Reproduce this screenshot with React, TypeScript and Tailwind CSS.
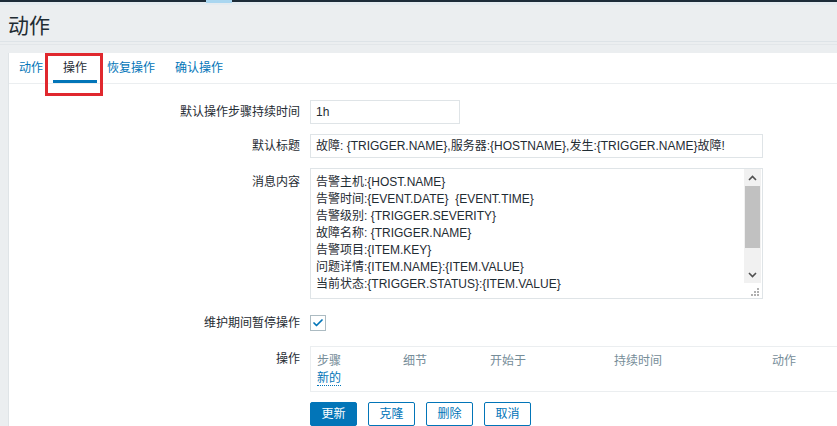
import { Check } from 'lucide-react'

const font = { fontFamily: '"Liberation Sans", Arial, "Noto Sans CJK SC", sans-serif' }

export default function App() {
  const tabs = ['动作', '操作', '恢复操作', '确认操作']
  const lines = [
    '告警主机:{HOST.NAME}',
    '告警时间:{EVENT.DATE}  {EVENT.TIME}',
    '告警级别: {TRIGGER.SEVERITY}',
    '故障名称: {TRIGGER.NAME}',
    '告警项目:{ITEM.KEY}',
    '问题详情:{ITEM.NAME}:{ITEM.VALUE}',
    '当前状态:{TRIGGER.STATUS}:{ITEM.VALUE}',
  ]
  const cols = [
    { name: '步骤', w: 'w-[86px]' },
    { name: '细节', w: 'w-[87px]' },
    { name: '开始于', w: 'w-[124px]' },
    { name: '持续时间', w: 'w-[158px]' },
    { name: '动作', w: 'w-[60px]' },
  ]

  return (
    <div className="w-[837px] h-[426px] overflow-hidden bg-[#ebeef0] text-[12px] text-[#1f2c33]" style={font}>
      {/* top bar */}
      <div className="h-[2px] bg-[#1d2c38] flex">
        <div className="ml-[206px] w-[26px] h-[3px] bg-[#a9d6f0]" />
      </div>
      <div className="h-[3px] bg-[#e4ebf0]" />

      {/* header */}
      <div className="h-[37px] pl-[8px] flex items-center border-b border-[#dde3e7]">
        <h1 className="text-[21px] leading-none mt-[4px]">动作</h1>
      </div>
      <div className="h-[3px] border-b border-[#e2e6e9]" />
      <div className="h-[8px]" />

      {/* panel */}
      <div className="ml-[8px] bg-white border-l border-[#dfe4e7] h-[400px] relative">
        <div className="flex h-[31px] border-b border-[#ebeef0]">
          {tabs.map((t, i) => (
            <div
              key={t}
              className={`px-[10px] flex items-center ${
                i === 1 ? 'text-[#1f2c33] border-b-[3px] border-[#0275b8] pt-[3px]' : 'text-[#0275b8]'
              }`}
            >
              {t}
            </div>
          ))}
        </div>
        {/* annotation */}
        <div className="absolute left-[36px] top-0 w-[58px] h-[43px] border-[3px] border-[#e0282e]" />

        <div className="pt-[16px]">
          <div className="flex items-center h-[24px]">
            <div className="w-[301px] text-right pr-[10px]">默认操作步骤持续时间</div>
            <div className="w-[150px] h-[24px] border border-[#dfe4e7] px-[5px] flex items-center">1h</div>
          </div>

          <div className="flex items-center h-[24px] mt-[10px]">
            <div className="w-[301px] text-right pr-[10px]">默认标题</div>
            <div className="w-[453px] h-[24px] border border-[#dfe4e7] px-[5px] flex items-center whitespace-nowrap overflow-hidden">
              故障: {'{TRIGGER.NAME}'},服务器:{'{HOSTNAME}'},发生:{'{TRIGGER.NAME}'}故障!
            </div>
          </div>

          <div className="flex mt-[10px]">
            <div className="w-[301px] text-right pr-[10px] pt-[5px]">消息内容</div>
            <div className="w-[453px] h-[131px] border border-[#dfe4e7] flex overflow-hidden">
              <div className="flex-1 pl-[5px] pt-[5px] leading-[17px] whitespace-pre overflow-hidden">
                {lines.map((l) => (
                  <div key={l}>{l}</div>
                ))}
              </div>
              <div className="w-[17px] flex flex-col mr-[1px]">
                <div className="flex-1 flex flex-col bg-[#f1f1f1]">
                  <div className="h-[17px] flex items-center justify-center text-[#505050]">
                    <svg width="9" height="6" viewBox="0 0 9 6">
                      <path d="M1 5 L4.5 1.5 L8 5" fill="none" stroke="currentColor" strokeWidth="1.6" />
                    </svg>
                  </div>
                  <div className="h-[62px] bg-[#c1c1c1] mx-[1px]" />
                  <div className="flex-1" />
                  <div className="h-[17px] flex items-center justify-center text-[#505050]">
                    <svg width="9" height="6" viewBox="0 0 9 6">
                      <path d="M1 1 L4.5 4.5 L8 1" fill="none" stroke="currentColor" strokeWidth="1.6" />
                    </svg>
                  </div>
                </div>
                <div className="h-[15px] flex items-end justify-end p-[2px]">
                  <svg width="8" height="8" viewBox="0 0 8 8" fill="#b0b0b0">
                    <rect x="6" y="0" width="2" height="2" />
                    <rect x="3" y="3" width="2" height="2" />
                    <rect x="6" y="3" width="2" height="2" />
                    <rect x="0" y="6" width="2" height="2" />
                    <rect x="3" y="6" width="2" height="2" />
                    <rect x="6" y="6" width="2" height="2" />
                  </svg>
                </div>
              </div>
            </div>
          </div>

          <div className="flex items-center mt-[16px] h-[16px]">
            <div className="w-[301px] text-right pr-[10px]">维护期间暂停操作</div>
            <div className="w-[16px] h-[16px] border border-[#acbbc2] flex items-center justify-center">
              <Check className="w-[12px] h-[12px] text-[#0275b8]" strokeWidth={3.5} />
            </div>
          </div>

          <div className="flex mt-[15px]">
            <div className="w-[301px] text-right pr-[10px] pt-[4px]">操作</div>
            <div className="flex-1 h-[46px] border border-r-0 border-[#ebeef0] pl-[6px] pt-[5px]">
              <div className="flex text-[#768d99] h-[17px]">
                {cols.map((c) => (
                  <div key={c.name} className={`${c.w} shrink-0`}>
                    {c.name}
                  </div>
                ))}
              </div>
              <span className="text-[#0275b8] border-b border-dotted border-[#0275b8]">新的</span>
            </div>
          </div>

          <div className="flex gap-[11px] mt-[10px] ml-[301px]">
            <button className="w-[47px] h-[24px] bg-[#0275b8] text-white rounded-[2px] border border-[#0275b8]">更新</button>
            {['克隆', '删除', '取消'].map((b) => (
              <button
                key={b}
                className="w-[47px] h-[24px] bg-white text-[#0275b8] rounded-[2px] border border-[#0275b8]"
              >
                {b}
              </button>
            ))}
          </div>
        </div>
      </div>
    </div>
  )
}
